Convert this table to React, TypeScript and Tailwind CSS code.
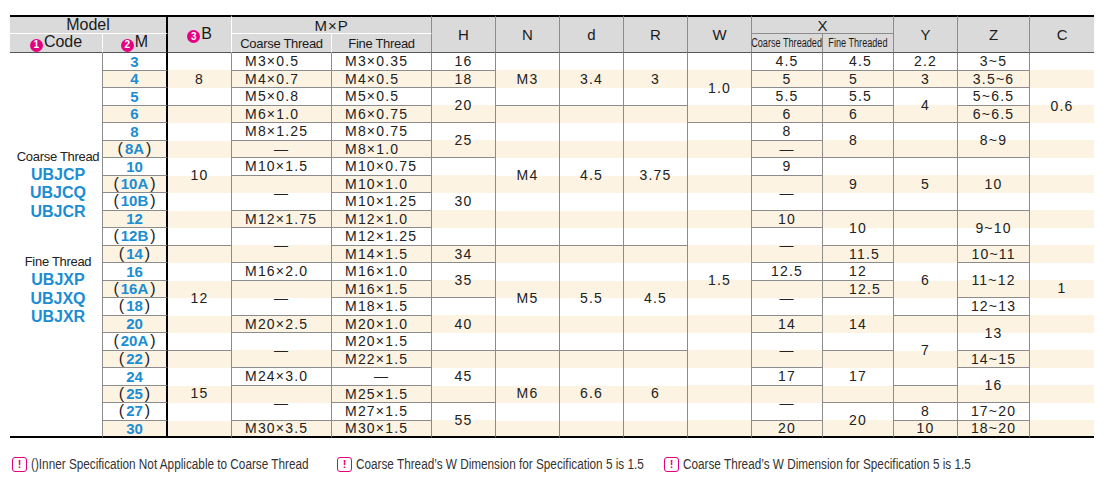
import React from 'react';

// [text, rowSpan, extra classes]
type Cell = [string, number, string?];

type Col = {
  cells: Cell[];
  align: string;
  right: string;
  kind?: 'm' | 'xf';
};

const GRAY_R = 'border-r border-r-[#8c8c8c]';
const ROWS = 22;

const mList = ['3', '4', '5', '6', '8', '(8A)', '10', '(10A)', '(10B)', '12', '(12B)', '(14)', '16', '(16A)', '(18)', '20', '(20A)', '(22)', '24', '(25)', '(27)', '30'];

const fineList = ['M3×0.35', 'M4×0.5', 'M5×0.5', 'M6×0.75', 'M8×0.75', 'M8×1.0', 'M10×0.75', 'M10×1.0', 'M10×1.25', 'M12×1.0', 'M12×1.25', 'M14×1.5', 'M16×1.0', 'M16×1.5', 'M18×1.5', 'M20×1.0', 'M20×1.5', 'M22×1.5', '—', 'M25×1.5', 'M27×1.5', 'M30×1.5'];

const cols: Col[] = [
  { cells: mList.map((v) => [v, 1] as Cell), align: 'text-center', right: 'border-r-2 border-r-black', kind: 'm' },
  { cells: [['8', 3], ['10', 8], ['12', 6], ['15', 5]], align: 'text-center', right: GRAY_R },
  {
    cells: [
      ['M3×0.5', 1], ['M4×0.7', 1], ['M5×0.8', 1], ['M6×1.0', 1], ['M8×1.25', 1], ['—', 1],
      ['M10×1.5', 1], ['—', 2], ['M12×1.75', 1], ['—', 2], ['M16×2.0', 1], ['—', 2],
      ['M20×2.5', 1], ['—', 2], ['M24×3.0', 1], ['—', 2], ['M30×3.5', 1],
    ],
    align: 'text-left pl-[13px]',
    right: GRAY_R,
  },
  { cells: fineList.map((v) => [v, 1] as Cell), align: 'text-left pl-[13px]', right: GRAY_R },
  {
    cells: [['16', 1], ['18', 1], ['20', 2], ['25', 2], ['30', 5], ['34', 1], ['35', 2], ['40', 3], ['45', 3], ['55', 2]],
    align: 'text-center',
    right: GRAY_R,
  },
  { cells: [['M3', 3], ['M4', 8], ['M5', 6], ['M6', 5]], align: 'text-center', right: GRAY_R },
  { cells: [['3.4', 3], ['4.5', 8], ['5.5', 6], ['6.6', 5]], align: 'text-center', right: GRAY_R },
  { cells: [['3', 3], ['3.75', 8], ['4.5', 6], ['6', 5]], align: 'text-center', right: GRAY_R },
  { cells: [['1.0', 4], ['1.5', 18]], align: 'text-center', right: GRAY_R },
  {
    cells: [
      ['4.5', 1], ['5', 1], ['5.5', 1], ['6', 1], ['8', 1], ['—', 1], ['9', 1], ['—', 2], ['10', 1], ['—', 2],
      ['12.5', 1], ['—', 2], ['14', 1], ['—', 2], ['17', 1], ['—', 2], ['20', 1],
    ],
    align: 'text-center',
    right: GRAY_R,
  },
  {
    cells: [
      ['4.5', 1], ['5', 1], ['5.5', 1], ['6', 1], ['8', 2], ['9', 3], ['10', 2], ['11.5', 1], ['12', 1], ['12.5', 1],
      ['14', 3], ['17', 3], ['20', 2],
    ],
    align: 'text-left pl-[26px]',
    right: GRAY_R,
    kind: 'xf',
  },
  {
    cells: [['2.2', 1], ['3', 1], ['4', 2], ['', 2], ['5', 3], ['', 2], ['6', 4], ['7', 4], ['', 1], ['8', 1], ['10', 1]],
    align: 'text-center',
    right: GRAY_R,
  },
  {
    cells: [
      ['3~5', 1], ['3.5~6', 1], ['5~6.5', 1], ['6~6.5', 1], ['8~9', 2], ['10', 3], ['9~10', 2], ['10~11', 1],
      ['11~12', 2], ['12~13', 1], ['13', 2], ['14~15', 1], ['16', 2], ['17~20', 1], ['18~20', 1],
    ],
    align: 'text-center',
    right: GRAY_R,
  },
  { cells: [['0.6', 6, 'nb'], ['1', 16, 'pb-[18px]']], align: 'text-center', right: '' },
];

// map each column to the rows where a cell starts
const starts = cols.map((col) => {
  const map = new Map<number, { cell: Cell; end: number }>();
  let r = 0;
  col.cells.forEach((cell) => {
    map.set(r, { cell, end: r + cell[1] - 1 });
    r += cell[1];
  });
  return map;
});

function Num({ n }: { n: number }) {
  return (
    <span className="inline-flex items-center justify-center w-[13px] h-[13px] rounded-full bg-[#e5007f] text-white text-[10px] font-bold leading-none mr-[1px] align-[-1px]">
      {n}
    </span>
  );
}

function MValue({ v }: { v: string }) {
  if (v.startsWith('(')) {
    return (
      <span>
        <span className="text-[#222] font-normal text-[16px] mr-[2px]">(</span>
        {v.slice(1, -1)}
        <span className="text-[#222] font-normal text-[16px] ml-[2px]">)</span>
      </span>
    );
  }
  return <span>{v}</span>;
}

function Note({ text, width }: { text: string; width: string }) {
  return (
    <div className={`flex items-center gap-[4px] ${width}`}>
      <span className="inline-flex shrink-0 items-center justify-center w-[15px] h-[15px] rounded-[3px] border-[1.5px] border-[#e5007f] text-[#e5007f] text-[11px] font-bold leading-none">
        !
      </span>
      <span className="inline-block whitespace-nowrap origin-left scale-x-[0.84] text-[14px] text-[#333]">{text}</span>
    </div>
  );
}

// header base, font size is set per cell
const TH = 'bg-[#dadada] font-normal leading-none text-[#1a1a1a] p-0 text-center';
const TOP = 'border-t-2 border-t-black';
const HB = 'border-b border-b-[#555]';

export default function App() {
  return (
    <div className="w-[1110px] h-[492px] bg-white pl-[10px] pt-[15px] font-['Liberation_Sans',Arial,sans-serif] text-[#222]">
      <table className="table-fixed border-separate border-spacing-0 w-[1084px]">
        <colgroup>
          <col className="w-[93px]" />
          <col className="w-[65px]" />
          <col className="w-[64px]" />
          <col className="w-[100px]" />
          <col className="w-[100px]" />
          <col className="w-[64px]" />
          <col className="w-[64px]" />
          <col className="w-[64px]" />
          <col className="w-[64px]" />
          <col className="w-[64px]" />
          <col className="w-[71px]" />
          <col className="w-[71px]" />
          <col className="w-[64px]" />
          <col className="w-[72px]" />
          <col className="w-[64px]" />
        </colgroup>
        <thead>
          <tr className="h-[18px]">
            <th colSpan={2} className={`${TH} ${TOP} border-r-2 border-r-black border-b border-b-white text-[16px]`}>Model</th>
            <th rowSpan={2} className={`${TH} ${TOP} ${HB} border-r border-r-white text-[16px]`}>
              <Num n={3} />B
            </th>
            <th colSpan={2} className={`${TH} ${TOP} ${GRAY_R} border-b border-b-white text-[15px] tracking-[1px]`}>M×P</th>
            <th rowSpan={2} className={`${TH} ${TOP} ${HB} ${GRAY_R} text-[15px]`}>H</th>
            <th rowSpan={2} className={`${TH} ${TOP} ${HB} ${GRAY_R} text-[15px]`}>N</th>
            <th rowSpan={2} className={`${TH} ${TOP} ${HB} ${GRAY_R} text-[15px]`}>d</th>
            <th rowSpan={2} className={`${TH} ${TOP} ${HB} ${GRAY_R} text-[15px]`}>R</th>
            <th rowSpan={2} className={`${TH} ${TOP} ${HB} ${GRAY_R} text-[15px]`}>W</th>
            <th colSpan={2} className={`${TH} ${TOP} ${GRAY_R} border-b border-b-[#8c8c8c] text-[15px]`}>X</th>
            <th rowSpan={2} className={`${TH} ${TOP} ${HB} ${GRAY_R} text-[15px]`}>Y</th>
            <th rowSpan={2} className={`${TH} ${TOP} ${HB} ${GRAY_R} text-[15px]`}>Z</th>
            <th rowSpan={2} className={`${TH} ${TOP} ${HB} text-[15px]`}>C</th>
          </tr>
          <tr className="h-[19px]">
            <th className={`${TH} ${HB} border-r border-r-white text-[16px]`}>
              <Num n={1} />Code
            </th>
            <th className={`${TH} ${HB} border-r-2 border-r-black text-[16px]`}>
              <Num n={2} />M
            </th>
            <th className={`${TH} ${HB} border-r border-r-white text-[13px] tracking-[-0.3px]`}>Coarse Thread</th>
            <th className={`${TH} ${HB} ${GRAY_R} text-[13px] tracking-[-0.3px]`}>Fine Thread</th>
            <th className={`${TH} ${HB} ${GRAY_R} text-[12px]`}>
              <div className="flex justify-center">
                <span className="inline-block whitespace-nowrap scale-x-[0.76]">Coarse Threaded</span>
              </div>
            </th>
            <th className={`${TH} ${HB} ${GRAY_R} text-[12px]`}>
              <div className="flex justify-center">
                <span className="inline-block whitespace-nowrap scale-x-[0.76]">Fine Threaded</span>
              </div>
            </th>
          </tr>
        </thead>
        <tbody className="bg-[repeating-linear-gradient(to_bottom,#ffffff_0px,#ffffff_17.5px,#fcf3e2_17.5px,#fcf3e2_35px)]">
          {Array.from({ length: ROWS }, (_, r) => (
            <tr key={r} className="h-[17.5px]">
              {r === 0 && (
                <td rowSpan={ROWS} className="bg-white p-0 border-r border-r-[#8c8c8c] border-b-2 border-b-black align-middle">
                  <div className="flex flex-col items-center pl-[4px] pb-[15px] leading-[18.3px]">
                    <span className="text-[13px] tracking-[-0.3px] text-[#222]">Coarse Thread</span>
                    <span className="text-[16px] font-bold text-[#1b8dd3]">UBJCP</span>
                    <span className="text-[16px] font-bold text-[#1b8dd3]">UBJCQ</span>
                    <span className="text-[16px] font-bold text-[#1b8dd3]">UBJCR</span>
                    <span className="text-[13px] tracking-[-0.3px] text-[#222] mt-[32px]">Fine Thread</span>
                    <span className="text-[16px] font-bold text-[#1b8dd3]">UBJXP</span>
                    <span className="text-[16px] font-bold text-[#1b8dd3]">UBJXQ</span>
                    <span className="text-[16px] font-bold text-[#1b8dd3]">UBJXR</span>
                  </div>
                </td>
              )}
              {cols.map((col, ci) => {
                const s = starts[ci].get(r);
                if (!s) return null;
                const [text, span, extra] = s.cell;
                const bottom =
                  extra === 'nb' ? '' : s.end === ROWS - 1 ? 'border-b-2 border-b-black' : 'border-b border-b-[#8c8c8c]';
                const align = text === '—' ? 'text-center' : col.align;
                const pad = extra && extra !== 'nb' ? extra : '';
                if (col.kind === 'm') {
                  return (
                    <td
                      key={ci}
                      rowSpan={span}
                      className={`p-0 leading-none text-center text-[15px] font-bold text-[#1b8dd3] ${col.right} ${bottom}`}
                    >
                      <MValue v={text} />
                    </td>
                  );
                }
                return (
                  <td
                    key={ci}
                    rowSpan={span}
                    className={`p-0 leading-none text-[14px] tracking-[1.2px] text-[#222] whitespace-nowrap ${align} ${col.right} ${bottom} ${pad}`}
                  >
                    {text}
                  </td>
                );
              })}
            </tr>
          ))}
        </tbody>
      </table>

      <div className="flex mt-[16px] pl-[2px]">
        <Note width="w-[325px]" text="()Inner Specification Not Applicable to Coarse Thread" />
        <Note width="w-[327px]" text="Coarse Thread’s W Dimension for Specification 5 is 1.5" />
        <Note width="w-[330px]" text="Coarse Thread’s W Dimension for Specification 5 is 1.5" />
      </div>
    </div>
  );
}
